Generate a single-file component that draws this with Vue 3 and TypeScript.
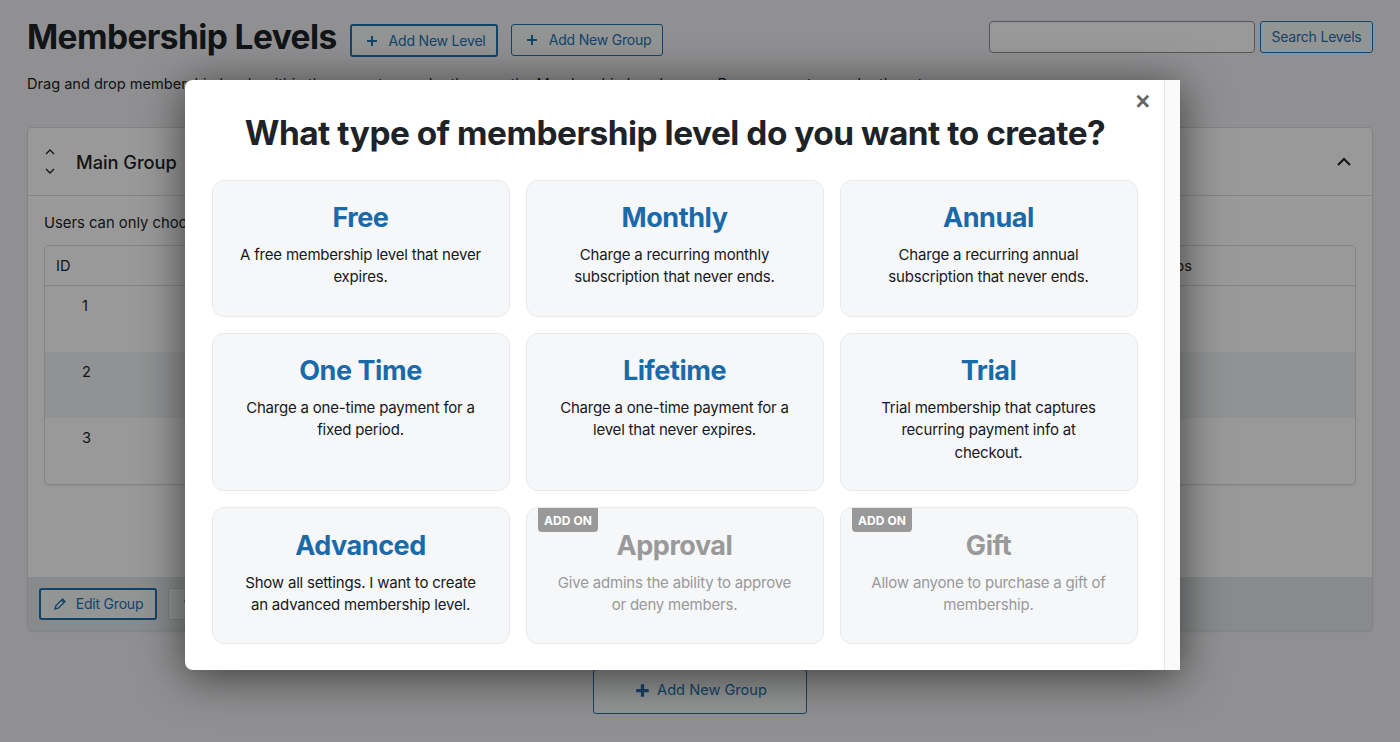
<script setup lang="ts">
interface Level { title: string; text: string; addon?: boolean }
const levels: Level[] = [
  { title: 'Free', text: 'A free membership level that never expires.' },
  { title: 'Monthly', text: 'Charge a recurring monthly subscription that never ends.' },
  { title: 'Annual', text: 'Charge a recurring annual subscription that never ends.' },
  { title: 'One Time', text: 'Charge a one-time payment for a fixed period.' },
  { title: 'Lifetime', text: 'Charge a one-time payment for a level that never expires.' },
  { title: 'Trial', text: 'Trial membership that captures recurring payment info at checkout.' },
  { title: 'Advanced', text: 'Show all settings. I want to create an advanced membership level.' },
  { title: 'Approval', text: 'Give admins the ability to approve or deny members.', addon: true },
  { title: 'Gift', text: 'Allow anyone to purchase a gift of membership.', addon: true },
]
const rows = [
  { id: 1, alt: false },
  { id: 2, alt: true },
  { id: 3, alt: false },
]
</script>

<template>
  <div class="page">
    <header class="top">
      <h1>Membership Levels</h1>
      <button class="btn primary-outline"><svg class="plus" viewBox="0 0 12 12"><path d="M6 1v10M1 6h10" /></svg>Add New Level</button>
      <button class="btn"><svg class="plus" viewBox="0 0 12 12"><path d="M6 1v10M1 6h10" /></svg>Add New Group</button>
      <div class="search">
        <input type="text" aria-label="Search" />
        <button class="btn small">Search Levels</button>
      </div>
    </header>
    <p class="intro">Drag and drop membership levels within the group to reorder them on the Membership Levels page. Drag groups to reorder them too.</p>

    <section class="group">
      <div class="group-head">
        <div class="arrows">
          <svg viewBox="0 0 12 8"><path d="M2 6l4-4 4 4" /></svg>
          <svg viewBox="0 0 12 8"><path d="M2 2l4 4 4-4" /></svg>
        </div>
        <h2>Main Group</h2>
        <svg class="collapse" viewBox="0 0 16 10"><path d="M2 8l6-6 6 6" /></svg>
      </div>
      <div class="group-body">
        <p class="only">Users can only choose one level from this group.</p>
        <div class="table">
          <div class="thead"><span>ID</span><span class="groups-col">Groups</span></div>
          <div v-for="r in rows" :key="r.id" class="trow" :class="{ alt: r.alt }"><span>{{ r.id }}</span></div>
        </div>
      </div>
      <div class="group-foot">
        <button class="btn edit">
          <svg class="pencil" viewBox="0 0 14 14"><path d="M2 12l.8-3.2L9.6 2l2.4 2.4-6.8 6.8zM8.4 3.2l2.4 2.4" /></svg>Edit Group
        </button>
        <button class="btn trash">
          <svg class="bin" viewBox="0 0 14 14"><path d="M2 3.5h10M5 3.5V2h4v1.5M3.5 3.5l.6 8.5h5.8l.6-8.5" /></svg>Delete
        </button>
      </div>
    </section>

    <div class="add-wrap">
      <button class="btn large"><svg class="plus big" viewBox="0 0 12 12"><path d="M6 1v10M1 6h10" /></svg>Add New Group</button>
    </div>

    <div class="overlay">
      <div class="modal">
        <div class="modal-main">
          <span class="close">×</span>
          <h3>What type of membership level do you want to create?</h3>
          <div class="grid">
            <article v-for="l in levels" :key="l.title" class="card" :class="{ off: l.addon }">
              <span v-if="l.addon" class="badge">ADD ON</span>
              <h4>{{ l.title }}</h4>
              <p>{{ l.text }}</p>
            </article>
          </div>
        </div>
        <div class="scrollbar"></div>
      </div>
    </div>
  </div>
</template>

<style>
html, body { margin: 0; background: #f0f0f1; }
</style>

<style scoped>
.page {
  position: relative;
  height: 742px;
  overflow: hidden;
  box-sizing: border-box;
  padding: 21px 27px 0;
  background: #f0f1f3;
  font-family: Inter, "Liberation Sans", sans-serif;
  color: #1d2327;
}
.top { display: flex; align-items: flex-start; height: 33px; }
h1 { margin: 0 13px 0 0; font-size: 33.5px; font-weight: 700; letter-spacing: -0.6px; white-space: nowrap; line-height: 33px; }
.btn {
  display: inline-flex;
  align-items: center;
  justify-content: center;
  box-sizing: border-box;
  border: 1px solid #2271b1;
  border-radius: 3px;
  background: #f6f7f7;
  color: #2271b1;
  font: 14px/1 Inter, "Liberation Sans", sans-serif;
  letter-spacing: -0.2px;
  padding: 0;
}
.top > .btn { height: 32px; width: 152px; margin: 3px 0 0 0; padding-left: 4px; }
.top > .primary-outline { width: 148px; height: 33px; border-width: 2px; margin: 3px 13px 0 0; padding-left: 4px; }
.plus { width: 12px; height: 12px; margin-right: 11px; fill: none; stroke: #2271b1; stroke-width: 2; }
.plus.big { width: 15px; height: 15px; margin-right: 7px; stroke-width: 2.6; }
.search { margin-left: auto; display: flex; gap: 5px; }
.search input {
  width: 266px; height: 32px; box-sizing: border-box; margin: 0;
  border: 1px solid #8c8f94; border-radius: 4px; background: #fff;
}
.btn.small { width: 113px; height: 32px; }
.intro { margin: 20px 0 0; font-size: 14.6px; line-height: 20px; letter-spacing: -0.02px; white-space: nowrap; }
.group {
  margin: 33px 0 0;
  height: 504px;
  display: flex; flex-direction: column;
  border: 1px solid #dcdcde;
  border-radius: 4px;
  background: #fff;
  box-sizing: border-box;
  box-shadow: 0 1px 2px rgba(0,0,0,.08);
}
.group-head {
  display: flex; align-items: center; height: 68px; flex: none; box-sizing: border-box;
  padding: 0 20px 0 16px; border-bottom: 1px solid #dcdcde;
}
.arrows { display: flex; flex-direction: column; gap: 11px; width: 17px; margin-right: 15px; }
.arrows svg { width: 12px; height: 8px; fill: none; stroke: #1d2327; stroke-width: 1.3; }
h2 { margin: 0; font-size: 18.3px; font-weight: 500; letter-spacing: -0.05px; }
.collapse { margin-left: auto; width: 16px; height: 10px; fill: none; stroke: #1d2327; stroke-width: 2; }
.group-body { flex: 1; padding: 17px 16px 0; }
.only { margin: 0 0 12px; font-size: 14.8px; line-height: 20px; white-space: nowrap; }
.table { border: 1px solid #dcdcde; border-radius: 4px; box-sizing: border-box; height: 240px; overflow: hidden; font-size: 14.6px; box-shadow: 0 1px 2px rgba(0,0,0,.06); }
.thead { display: flex; justify-content: space-between; height: 40px; align-items: center; padding: 0 163px 0 11px; border-bottom: 1px solid #dcdcde; box-sizing: border-box; }
.trow { height: 66px; box-sizing: border-box; padding: 10px 0 0 37px; line-height: 20px; }
.trow.alt { background: #f2f3f5; }
.group-foot { display: flex; align-items: center; gap: 11px; height: 53px; flex: none; padding: 0 11px; background: #e3e6e8; }
.btn.edit { width: 118px; height: 32px; border-width: 2px; }
.pencil { width: 14px; height: 14px; margin-right: 9px; fill: none; stroke: #2271b1; stroke-width: 1.4; }
.btn.trash { width: 100px; height: 32px; border-color: #d4d5d7; color: #8c8f94; justify-content: flex-start; padding-left: 13px; }
.bin { width: 13px; height: 13px; margin-right: 6px; fill: none; stroke: #646970; stroke-width: 1.3; }
.add-wrap { display: flex; justify-content: center; }
.btn.large { width: 214px; height: 45px; font-size: 14.6px; letter-spacing: 0; border-width: 1px; margin-top: 38px; padding-bottom: 3px; padding-left: 2px; }

.overlay {
  position: absolute; inset: 0;
  background: rgba(0,0,0,.4);
}
.modal {
  position: absolute; left: 185px; top: 80px; width: 995px; height: 590px;
  display: flex; background: #fff;
  border-radius: 8px 0 0 8px;
  overflow: hidden;
}
.overlay::before {
  content: ""; position: absolute; left: 185px; top: 80px; width: 995px; height: 590px;
  border-radius: 8px 0 0 8px;
  box-shadow: 0 6px 45px rgba(0,0,0,.6);
}
.modal-main { position: relative; flex: 1; box-sizing: border-box; padding: 0 26px 0 27px; }
.scrollbar { width: 15px; flex: none; background: #fafafa; border-left: 1px solid #e8e8e8; }
.close {
  position: absolute; right: 14px; top: 7px;
  font: 700 25px/28px "Liberation Sans", sans-serif; color: #666;
}
h3 {
  margin: 32px 0 26px; text-align: center; font-size: 33.4px; line-height: 42px; font-weight: 700;
  letter-spacing: -0.48px;
  color: #1d2327; white-space: nowrap;
}
.grid {
  display: grid;
  grid-template-columns: repeat(3, 298px);
  grid-template-rows: 137px 158px 137px;
  column-gap: 16px; row-gap: 16px;
}
.card {
  position: relative; box-sizing: border-box; padding: 20px 28px 0 27px; text-align: center;
  background: #f5f7f9; border: 1px solid #e7e9ec; border-radius: 12px;
}
.card:nth-child(n+7) { padding-top: 21px; }
.card h4 { margin: 0 0 9px; font-size: 27px; line-height: 34px; font-weight: 700; letter-spacing: -0.45px; color: #1a6aaa; }
.card p { margin: 0; font-size: 15px; line-height: 22.4px; letter-spacing: -0.2px; color: #16191c; }
.card.off h4 { color: #999; }
.card.off p { color: #999; }
.badge {
  position: absolute; left: 11px; top: 0; width: 60px; height: 24px;
  display: flex; align-items: center; justify-content: center;
  background: #999; color: #fff; font-size: 12px; font-weight: 700; letter-spacing: 0.05px;
  border-radius: 0 0 4px 4px;
}
</style>
